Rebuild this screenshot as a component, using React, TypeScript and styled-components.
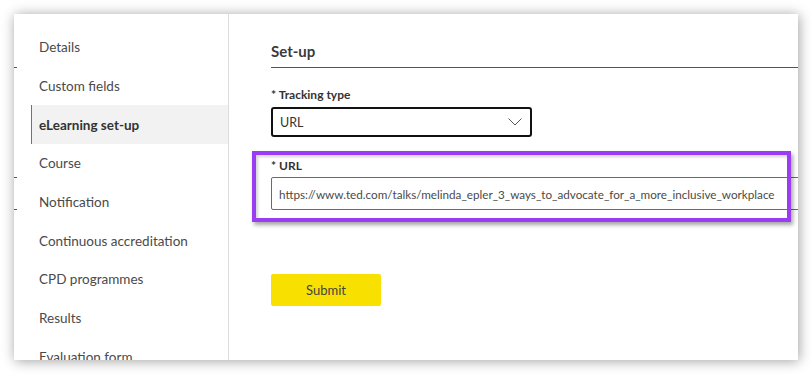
import React from 'react';
import styled, { createGlobalStyle } from 'styled-components';

const GlobalStyle = createGlobalStyle`
  html, body {
    margin: 0;
    padding: 0;
    background: #ffffff;
    font-family: Lato, "Open Sans", Arial, sans-serif;
    color: #474747;
  }
`;

const Page = styled.div`
  width: 812px;
  height: 374px;
  box-sizing: border-box;
  padding: 14px 14px 14px 14px;
  overflow: hidden;
`;

const Card = styled.div`
  position: relative;
  width: 784px;
  height: 346px;
  background: #ffffff;
  display: flex;
  overflow: hidden;
  box-shadow: 1px 1px 12px rgba(0, 0, 0, 0.38);
`;

const Sidebar = styled.nav`
  width: 215px;
  flex-shrink: 0;
  border-right: 1px solid #dcdcdc;
  box-sizing: border-box;
  padding-top: 14px;
`;

const NavItem = styled.div<{ $active?: boolean }>`
  height: 38.7px;
  margin-left: 17px;
  padding-left: 7px;
  display: flex;
  align-items: center;
  font-size: 13.5px;
  white-space: nowrap;
  border-left: 1px solid ${({ $active }) => ($active ? '#3d8c7c' : 'transparent')};
  background: ${({ $active }) => ($active ? '#f2f2f2' : 'transparent')};
  font-weight: ${({ $active }) => ($active ? 700 : 400)};
  color: ${({ $active }) => ($active ? '#333333' : '#4a4a4a')};
`;

const EdgeTick = styled.span<{ $top: number }>`
  position: absolute;
  left: 0;
  top: ${({ $top }) => $top}px;
  width: 3px;
  height: 1px;
  background: #555555;
`;

const Main = styled.section`
  flex: 1;
  padding-left: 42px;
  display: flex;
  flex-direction: column;
  align-items: flex-start;
`;

const Heading = styled.h2`
  align-self: stretch;
  margin: 0;
  padding: 27px 0 6px;
  line-height: 20px;
  font-size: 15px;
  font-weight: 700;
  color: #3a3a3a;
  border-bottom: 1px solid #555555;
`;

const FieldLabel = styled.label<{ $gap: number }>`
  margin-top: ${({ $gap }) => $gap}px;
  line-height: 16px;
  font-size: 12px;
  font-weight: 700;
  color: #333333;
`;

const Select = styled.div`
  margin-top: 4px;
  width: 261px;
  height: 30px;
  box-sizing: border-box;
  border: 2px solid #111111;
  border-radius: 3px;
  padding: 0 8px 0 7px;
  display: flex;
  align-items: center;
  justify-content: space-between;
  font-size: 12.5px;
  color: #333333;
`;

const UrlInput = styled.div`
  margin-top: 3px;
  width: calc(100% + 10px);
  height: 33px;
  box-sizing: border-box;
  border: 1px solid #6a6a6a;
  border-radius: 2px;
  padding-left: 7px;
  display: flex;
  align-items: center;
  font-size: 11.7px;
  color: #4a4a4a;
  white-space: nowrap;
`;

const SubmitButton = styled.button`
  margin-top: 64px;
  width: 110px;
  height: 32px;
  border: none;
  border-radius: 2px;
  background: #f8e000;
  font-family: Lato, "Open Sans", Arial, sans-serif;
  font-size: 13px;
  color: #444444;
  cursor: pointer;
`;

const Highlight = styled.div`
  position: absolute;
  left: 238px;
  top: 137px;
  width: 539px;
  height: 71px;
  box-sizing: border-box;
  border: 4px solid #9a3cf1;
  box-shadow: 2px 3px 4px rgba(0, 0, 0, 0.35), inset 2px 2px 3px rgba(0, 0, 0, 0.18);
  pointer-events: none;
`;

const Chevron = () => (
  <svg width="14" height="8" viewBox="0 0 14 8" fill="none">
    <path d="M0.5 0.5 L7 7 L13.5 0.5" stroke="#555" strokeWidth="1" />
  </svg>
);

const navItems = [
  'Details',
  'Custom fields',
  'eLearning set-up',
  'Course',
  'Notification',
  'Continuous accreditation',
  'CPD programmes',
  'Results',
  'Evaluation form',
];

export default function App() {
  return (
    <>
      <GlobalStyle />
      <Page>
        <Card>
          <Sidebar>
            {navItems.map((item) => (
              <NavItem key={item} $active={item === 'eLearning set-up'}>
                {item}
              </NavItem>
            ))}
          </Sidebar>
          <EdgeTick $top={53} />
          <EdgeTick $top={163} />
          <EdgeTick $top={195} />
          <Main>
            <Heading>Set-up</Heading>
            <FieldLabel $gap={19}>* Tracking type</FieldLabel>
            <Select>
              <span>URL</span>
              <Chevron />
            </Select>
            <FieldLabel $gap={21}>* URL</FieldLabel>
            <UrlInput>https://www.ted.com/talks/melinda_epler_3_ways_to_advocate_for_a_more_inclusive_workplace</UrlInput>
            <SubmitButton>Submit</SubmitButton>
          </Main>
          <Highlight />
        </Card>
      </Page>
    </>
  );
}
